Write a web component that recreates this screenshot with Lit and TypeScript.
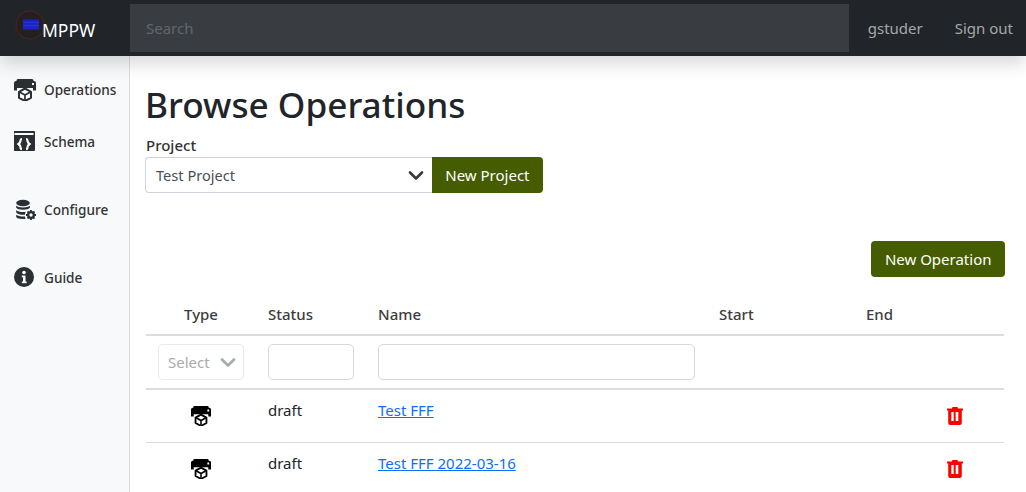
import { LitElement, html, css, svg } from 'lit';
import { customElement } from 'lit/decorators.js';

const opsIcon = (color: string) => svg`
  <svg class="icon" viewBox="0 0 22 23" width="22" height="23">
    <path fill=${color} fill-rule="evenodd" d="M4 1h14a1.500 1.500 0 0 1 1.500 1.500V3H20a2 2 0 0 1 2 2v7.500h-3V10H3v2.500H0V5a2 2 0 0 1 2-2h.500v-.500A1.500 1.500 0 0 1 4 1zM18 5v2h2V5z"/>
    <path fill="#fff" stroke=${color} stroke-width="2" stroke-linejoin="round" d="M11 10.500l6 3.300v6l-6 3.200-6-3.200v-6z"/>
    <path fill="none" stroke=${color} stroke-width="1.700" d="M5.500 14l5.500 3 5.500-3M11 17v5.500"/>
  </svg>`;

const chevron = (color: string) => svg`
  <svg class="chevron" viewBox="0 0 16 16" width="16" height="16">
    <path fill="none" stroke=${color} stroke-width="2.600" stroke-linecap="round" stroke-linejoin="round" d="M2 5.500l6 6 6-6"/>
  </svg>`;

const trash = svg`
  <svg class="trash" viewBox="0 0 16 18" width="16" height="18">
    <path fill="#f00" fill-rule="evenodd" d="M5.500 0h5l.7 1.500H16v2h-1.200V16a2 2 0 0 1-2 2H3.200a2 2 0 0 1-2-2V3.500H0v-2h4.800zM4.300 5v9h2.400V5zM8.700 5v9h2.600V5z"/>
  </svg>`;

@customElement('app-root')
export class AppRoot extends LitElement {
  static styles = css`
    * {
      box-sizing: border-box;
    }

    :host {
      display: grid;
      grid-template-columns: 130px 1fr;
      grid-template-rows: 56px 1fr;
      height: 100vh;
      overflow: hidden;
      background: #fff;
      color: #212529;
      font-family: 'Noto Sans', 'Open Sans', sans-serif;
      font-size: 15px;
    }

    .navbar {
      grid-column: 1 / 3;
      display: flex;
      align-items: stretch;
      background: #212529;
      box-shadow: 0 8px 16px rgba(0, 0, 0, 0.15);
      z-index: 1;
    }

    .brand {
      width: 130px;
      display: flex;
      align-items: center;
      padding-left: 15px;
      color: #fff;
      font-size: 17.500px;
      flex: none;
    }

    .logo {
      margin-right: -3px;
      margin-top: -6px;
    }

    .brand span {
      margin-top: 4px;
    }

    .search {
      flex: 1;
      margin: 4px 0;
      padding: 0 16px;
      border: 0;
      outline: 0;
      background: #393d42;
      color: #fff;
      font: inherit;
      font-size: 15px;
    }

    .search::placeholder {
      color: #62666a;
    }

    .nav-link {
      display: flex;
      align-items: center;
      padding-left: 19px;
      padding-right: 13px;
      color: #a6a8aa;
      font-size: 15px;
      text-decoration: none;
    }

    .sidebar {
      background: #f8f9fa;
      border-right: 1px solid #dcdddf;
      padding-top: 21px;
      display: flex;
      flex-direction: column;
    }

    .side-item {
      display: flex;
      align-items: center;
      gap: 8px;
      height: 24px;
      padding-left: 14px;
      color: #333;
      font-size: 13.600px;
      font-weight: 500;
      text-decoration: none;
    }

    .side-item.schema {
      margin-top: 28px;
    }

    .side-item.configure,
    .side-item.guide {
      margin-top: 44px;
    }

    .main {
      padding: 0 21px 0 15px;
      min-width: 0;
    }

    h1 {
      margin: 25px 0 0;
      font-size: 35.200px;
      font-weight: 500;
      line-height: 46px;
    }

    label {
      display: block;
      margin-top: 8px;
      padding-left: 1px;
      font-size: 15px;
      line-height: 20px;
      font-weight: 500;
      color: #333;
    }

    .project {
      display: flex;
      width: 398px;
      margin-top: 2px;
    }

    .select {
      display: flex;
      align-items: center;
      justify-content: space-between;
      border: 1px solid #ced4da;
      background: #fff;
      font-size: 15px;
    }

    .select.main-select {
      flex: 1;
      height: 36px;
      padding: 0 8px 0 10px;
      border-right: 0;
      border-radius: 4px 0 0 4px;
      font-size: 14.600px;
      color: #495057;
    }

    .btn {
      display: inline-flex;
      align-items: center;
      height: 36px;
      padding: 0 13.500px;
      border: 0;
      border-radius: 4px;
      background: #455d00;
      color: #fff;
      font: inherit;
      font-size: 15px;
    }

    .project .btn {
      border-radius: 0 4px 4px 0;
    }

    .actions {
      display: flex;
      justify-content: flex-end;
      margin-top: 48px;
    }

    table {
      width: 858px;
      margin: 18px 0 0 1px;
      border-collapse: collapse;
      table-layout: fixed;
    }

    .c-type {
      width: 110px;
    }
    .c-status {
      width: 110px;
    }
    .c-name {
      width: 341px;
    }
    .c-start {
      width: 147px;
    }
    .c-end {
      width: 51px;
    }
    .c-del {
      width: 99px;
    }

    th {
      height: 40px;
      padding: 0 12px 2px;
      border-bottom: 2px solid #dcdcdc;
      text-align: left;
      font-size: 15px;
      font-weight: 500;
      color: #3d3d3d;
    }

    td {
      height: 53px;
      padding: 0 12px;
      border-bottom: 1px solid #dcdcdc;
      vertical-align: top;
      font-size: 15px;
    }

    .filters td {
      height: 54px;
      padding-top: 8px;
      border-bottom: 2px solid #dcdcdc;
    }

    th.center {
      text-align: center;
    }

    td.text {
      padding-top: 10px;
    }

    .icon {
      display: block;
      flex: none;
    }

    td .icon {
      width: 20px;
      height: 21px;
      margin: 15px auto 0;
    }

    .trash {
      display: block;
      margin: 17px auto 0;
    }

    .select.small {
      height: 36px;
      padding: 0 7px 0 9px;
      border-color: #e9ecef;
      border-radius: 4px;
      color: #a8abae;
      font-size: 15px;
    }

    input.filter {
      display: block;
      width: 100%;
      height: 36px;
      border: 1px solid #d6d9dc;
      border-radius: 5px;
      background: #fff;
    }

    a.link {
      color: #0d6efd;
      text-decoration: underline;
    }
  `;

  render() {
    return html`
      <nav class="navbar">
        <div class="brand">
          <svg class="logo" viewBox="0 0 30 30" width="30" height="30">
            <circle cx="15" cy="15" r="14" fill="#23201f" stroke="#3d2322" stroke-width="1.500" />
            <rect x="8" y="9.500" width="16" height="10" fill="#1a22c8" />
            <path stroke="#2a34d4" stroke-width="1" d="M8 12.500h16M8 15.500h16" />
          </svg>
          <span>MPPW</span>
        </div>
        <input class="search" placeholder="Search" />
        <a class="nav-link" href="#">gstuder</a>
        <a class="nav-link" href="#">Sign out</a>
      </nav>

      <aside class="sidebar">
        <a class="side-item" href="#">${opsIcon('#2b2f33')}Operations</a>
        <a class="side-item schema" href="#">
          <svg class="icon" viewBox="0 0 22 22" width="22" height="22">
            <path fill="#2b2f33" d="M0 1h20a1 1 0 0 1 1 1v18a1 1 0 0 1-1 1H0a1 1 0 0 1-1-1V2a1 1 0 0 1 1-1z" />
            <rect x="0.500" y="3" width="19" height="2" fill="#fff" />
            <path fill="none" stroke="#fff" stroke-width="2.200" d="M8 9c-1.500 0-1.500 1-1.500 1.800s0 1.700-2 3.200c2 1.500 2 2.400 2 3.200s0 1.800 1.500 1.800M12 9c1.500 0 1.500 1 1.500 1.800s0 1.700 2 3.200c-2 1.500-2 2.400-2 3.200s0 1.800-1.500 1.800" />
          </svg>
          Schema
        </a>
        <a class="side-item configure" href="#">
          <svg class="icon" viewBox="0 0 22 22" width="22" height="22">
            <ellipse cx="9" cy="5" rx="6.800" ry="3.300" fill="#2b2f33" />
            <path fill="#2b2f33" d="M2.200 7.500c1 2.500 12.600 2.500 13.600 0v2.300c-1 2.500-12.600 2.500-13.600 0zM2.200 12c1.500 2 7 2.500 9.300 1.700l-.5 3c-3 .300-7.800-.300-8.800-2.200zM2.200 16.800c1.500 1.500 6 2 8.800 1.700l.5 2.300c-3.500.500-8.500 0-9.300-1.800z" />
            <circle cx="17" cy="17" r="2.800" fill="none" stroke="#2b2f33" stroke-width="2.200" />
            <path stroke="#2b2f33" stroke-width="1.800" d="M17 12v2.500M17 19.500V22M12 17h2.500M19.500 17H22M13.500 13.500l1.700 1.700M18.800 18.800l1.700 1.700M20.500 13.500l-1.700 1.700M15.200 18.800l-1.700 1.700" />
          </svg>
          Configure
        </a>
        <a class="side-item guide" href="#">
          <svg class="icon" viewBox="0 0 22 22" width="22" height="22">
            <circle cx="10" cy="11" r="10" fill="#2b2f33" />
            <circle cx="10" cy="6.500" r="1.800" fill="#fff" />
            <path fill="#fff" d="M7.800 9.500h3.700v6h1.200v1.800H7.800v-1.800H9v-4.200H7.800z" />
          </svg>
          Guide
        </a>
      </aside>

      <main class="main">
        <h1>Browse Operations</h1>
        <label>Project</label>
        <div class="project">
          <div class="select main-select"><span>Test Project</span>${chevron('#343a40')}</div>
          <button class="btn">New Project</button>
        </div>
        <div class="actions"><button class="btn">New Operation</button></div>
        <table>
          <colgroup>
            <col class="c-type" /><col class="c-status" /><col class="c-name" />
            <col class="c-start" /><col class="c-end" /><col class="c-del" />
          </colgroup>
          <thead>
            <tr>
              <th class="center">Type</th>
              <th>Status</th>
              <th>Name</th>
              <th>Start</th>
              <th>End</th>
              <th></th>
            </tr>
          </thead>
          <tbody>
            <tr class="filters">
              <td><div class="select small"><span>Select</span>${chevron('#a8abae')}</div></td>
              <td><input class="filter" /></td>
              <td><input class="filter" /></td>
              <td></td>
              <td></td>
              <td></td>
            </tr>
            ${['Test FFF', 'Test FFF 2022-03-16'].map(
              (name) => html`
                <tr>
                  <td>${opsIcon('#000')}</td>
                  <td class="text">draft</td>
                  <td class="text"><a class="link" href="#">${name}</a></td>
                  <td></td>
                  <td></td>
                  <td>${trash}</td>
                </tr>
              `
            )}
          </tbody>
        </table>
      </main>
    `;
  }
}
